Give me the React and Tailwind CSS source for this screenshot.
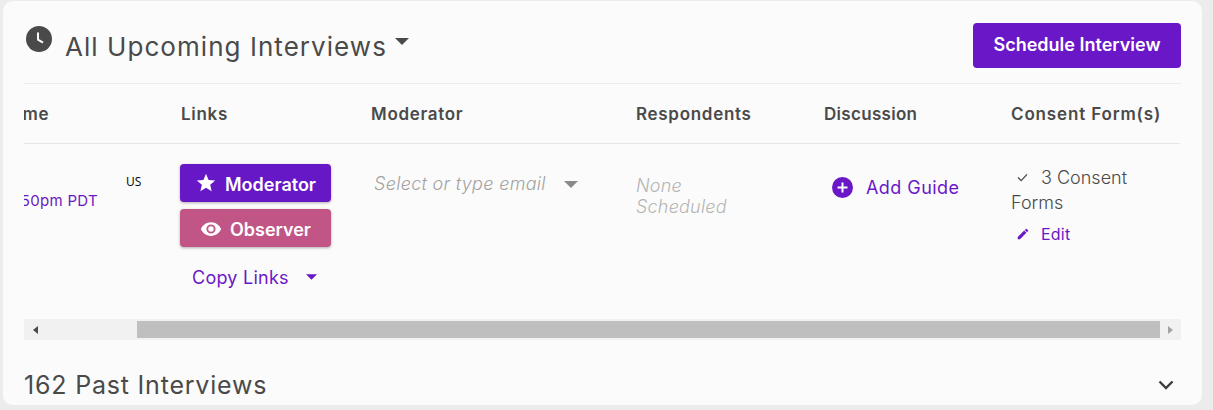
import React from "react";

const Caret = ({ className }) => (
  <svg viewBox="0 0 14 7" className={className} fill="currentColor"><path d="M0 0h14L7 7z" /></svg>
);

export default function App() {
  return (
    <div className="h-[410px] w-[1213px] overflow-hidden bg-[#ececec] pt-px pl-[3px] font-['Inter','Liberation_Sans',sans-serif]">
      <div className="h-[404px] w-[1199px] rounded-[10px] bg-[#fbfbfb] pl-[21px] pr-[21px]">
        <div className="flex h-[83px] items-start justify-between border-b border-[#ececec]">
          <div className="flex items-start">
            <svg viewBox="0 0 26 26" className="mt-[25px] ml-[2px] h-[26px] w-[26px]">
              <circle cx="13" cy="13" r="13" fill="#4a4a4a" />
              <path d="M12 6.5v7.2l5 3" fill="none" stroke="#fbfbfb" strokeWidth="2" />
            </svg>
            <span className="ml-[13px] mt-[29px] text-[26px] leading-[34px] tracking-[1.05px] text-[#4a4a4a]">All Upcoming Interviews</span>
            <Caret className="ml-[8px] mt-[37px] h-[7px] w-[14px] text-[#4a4a4a]" />
          </div>
          <button className="mt-[22px] h-[45px] w-[208px] rounded-[4px] bg-[#6a18c7] pb-[2px] text-[18px] font-semibold text-white">Schedule Interview</button>
        </div>

        <div className="w-[1156px] overflow-hidden">
          <div className="-ml-[100px] w-[1256px]">
            <div className="flex h-[60px] items-center border-b border-[#e6e6e6] pt-[2px] text-[17px] font-semibold tracking-[0.7px] text-[#4a4a4a]">
              <div className="w-[257px] whitespace-nowrap pl-[33px]">Start Time</div>
              <div className="w-[190px]">Links</div>
              <div className="w-[265px]">Moderator</div>
              <div className="w-[188px]">Respondents</div>
              <div className="w-[187px] tracking-[0.3px]">Discussion</div>
              <div className="w-[169px] tracking-[0.85px]">Consent Form(s)</div>
            </div>
            <div className="flex h-[175px] items-start">
              <div className="flex w-[257px] items-start">
                <div className="mt-[46px] w-[202px] whitespace-nowrap pr-[28px] text-right text-[15px] tracking-[0.3px] text-[#6a18c7]">Jul 8, 12:50pm PDT</div>
                <div className="mt-[29px] font-['Open_Sans',sans-serif] text-[12px] text-black">US</div>
              </div>
              <div className="-ml-px flex w-[191px] flex-col items-start pt-[20px]">
                <button className="flex h-[38px] w-[151px] items-center justify-center gap-[8px] rounded-[4px] bg-[#6618c7] pt-[2px] text-[18px] font-semibold text-white shadow-[0_1px_3px_rgba(0,0,0,0.3)]">
                  <svg viewBox="0 0 24 24" className="-mt-[2px] h-[22px] w-[22px]" fill="currentColor"><path d="M12 17.3l6.2 3.7-1.6-7L22 9.2l-7.2-.6L12 2 9.2 8.6 2 9.2 7.5 14l-1.7 7z" /></svg>
                  Moderator
                </button>
                <button className="mt-[7px] flex h-[38px] w-[151px] items-center justify-center gap-[8px] rounded-[4px] bg-[#c15586] pt-[2px] text-[18px] font-semibold text-white shadow-[0_1px_3px_rgba(0,0,0,0.3)]">
                  <svg viewBox="0 0 24 24" className="h-[22px] w-[22px]" fill="currentColor"><path d="M12 4.5C7 4.5 2.7 7.6 1 12c1.7 4.4 6 7.5 11 7.5s9.3-3.1 11-7.5c-1.7-4.4-6-7.5-11-7.5zM12 17a5 5 0 110-10 5 5 0 010 10zm0-8a3 3 0 100 6 3 3 0 000-6z" /></svg>
                  Observer
                </button>
                <div className="mt-[18px] ml-[12px] flex h-[24px] items-center text-[18px] tracking-[0.25px] text-[#6a18c7]">
                  Copy Links
                  <Caret className="ml-[17px] h-[6px] w-[11px]" />
                </div>
              </div>
              <div className="flex w-[265px] items-center pl-[3px] pt-[28px]">
                <span className="text-[18px] font-light italic leading-[24px] tracking-[0.3px] text-[#a3a3a3]">Select or type email</span>
                <Caret className="ml-[18px] h-[7px] w-[14px] text-[#8a8a8a]" />
              </div>
              <div className="w-[188px] pt-[31px] text-[18px] font-light italic leading-[21px] tracking-[0.2px] text-[#b5b5b5]">
                None<br />Scheduled
              </div>
              <div className="flex w-[187px] items-center pl-[8px] pt-[30px]">
                <svg viewBox="0 0 21 21" className="h-[21px] w-[21px]">
                  <circle cx="10.5" cy="10.5" r="10.5" fill="#6a18c7" />
                  <path d="M10.5 5.5v10M5.5 10.5h10" stroke="#fff" strokeWidth="2" />
                </svg>
                <span className="ml-[13px] text-[18px] tracking-[0.45px] text-[#6a18c7]">Add Guide</span>
              </div>
              <div className="w-[169px] pt-[21px] text-[18px] font-light leading-[25px] text-[#4a4a4a]">
                <div className="flex items-center">
                  <svg viewBox="0 0 12 10" className="ml-[6px] h-[9px] w-[11px]" fill="none" stroke="#4a4a4a" strokeWidth="1.5"><path d="M1 5l3.5 3.5L11 1.5" /></svg>
                  <span className="ml-[13px]">3 Consent</span>
                </div>
                <div>Forms</div>
                <div className="mt-[9px] flex items-center text-[16px] leading-[20px] tracking-[0.2px] text-[#6a18c7]">
                  <svg viewBox="0 0 24 24" className="ml-[5px] h-[14px] w-[14px]" fill="currentColor"><path d="M3 17.25V21h3.75L17.8 9.94l-3.75-3.75L3 17.25zM20.7 7.04a1 1 0 000-1.41l-2.34-2.34a1 1 0 00-1.41 0l-1.83 1.83 3.75 3.75 1.83-1.83z" /></svg>
                  <span className="ml-[11px] font-normal">Edit</span>
                </div>
              </div>
            </div>
          </div>
        </div>

        <div className="flex h-[21px] w-[1157px] items-stretch bg-[#f1f1f1]">
          <div className="flex w-[17px] items-center justify-center">
            <svg viewBox="0 0 5 8" className="ml-[5px] h-[8px] w-[5px]" fill="#4a4a4a"><path d="M5 0v8L0 4z" /></svg>
          </div>
          <div className="ml-[96px] mt-[2px] h-[17px] w-[1023px] bg-[#bfbfbf]"></div>
          <div className="flex flex-1 items-center justify-center">
            <svg viewBox="0 0 5 8" className="h-[8px] w-[5px]" fill="#a3a3a3"><path d="M0 0v8l5-4z" /></svg>
          </div>
        </div>

        <div className="flex h-[65px] w-[1156px] items-start justify-between pt-[29px]">
          <span className="text-[25px] leading-[33px] tracking-[0.8px] text-[#4a4a4a]">162 Past Interviews</span>
          <svg viewBox="0 0 16 10" className="mr-[6px] mt-[11px] h-[10px] w-[16px]" fill="none" stroke="#3d3d3d" strokeWidth="2.4"><path d="M1.5 1.5L8 8l6.5-6.5" /></svg>
        </div>
      </div>
    </div>
  );
}
